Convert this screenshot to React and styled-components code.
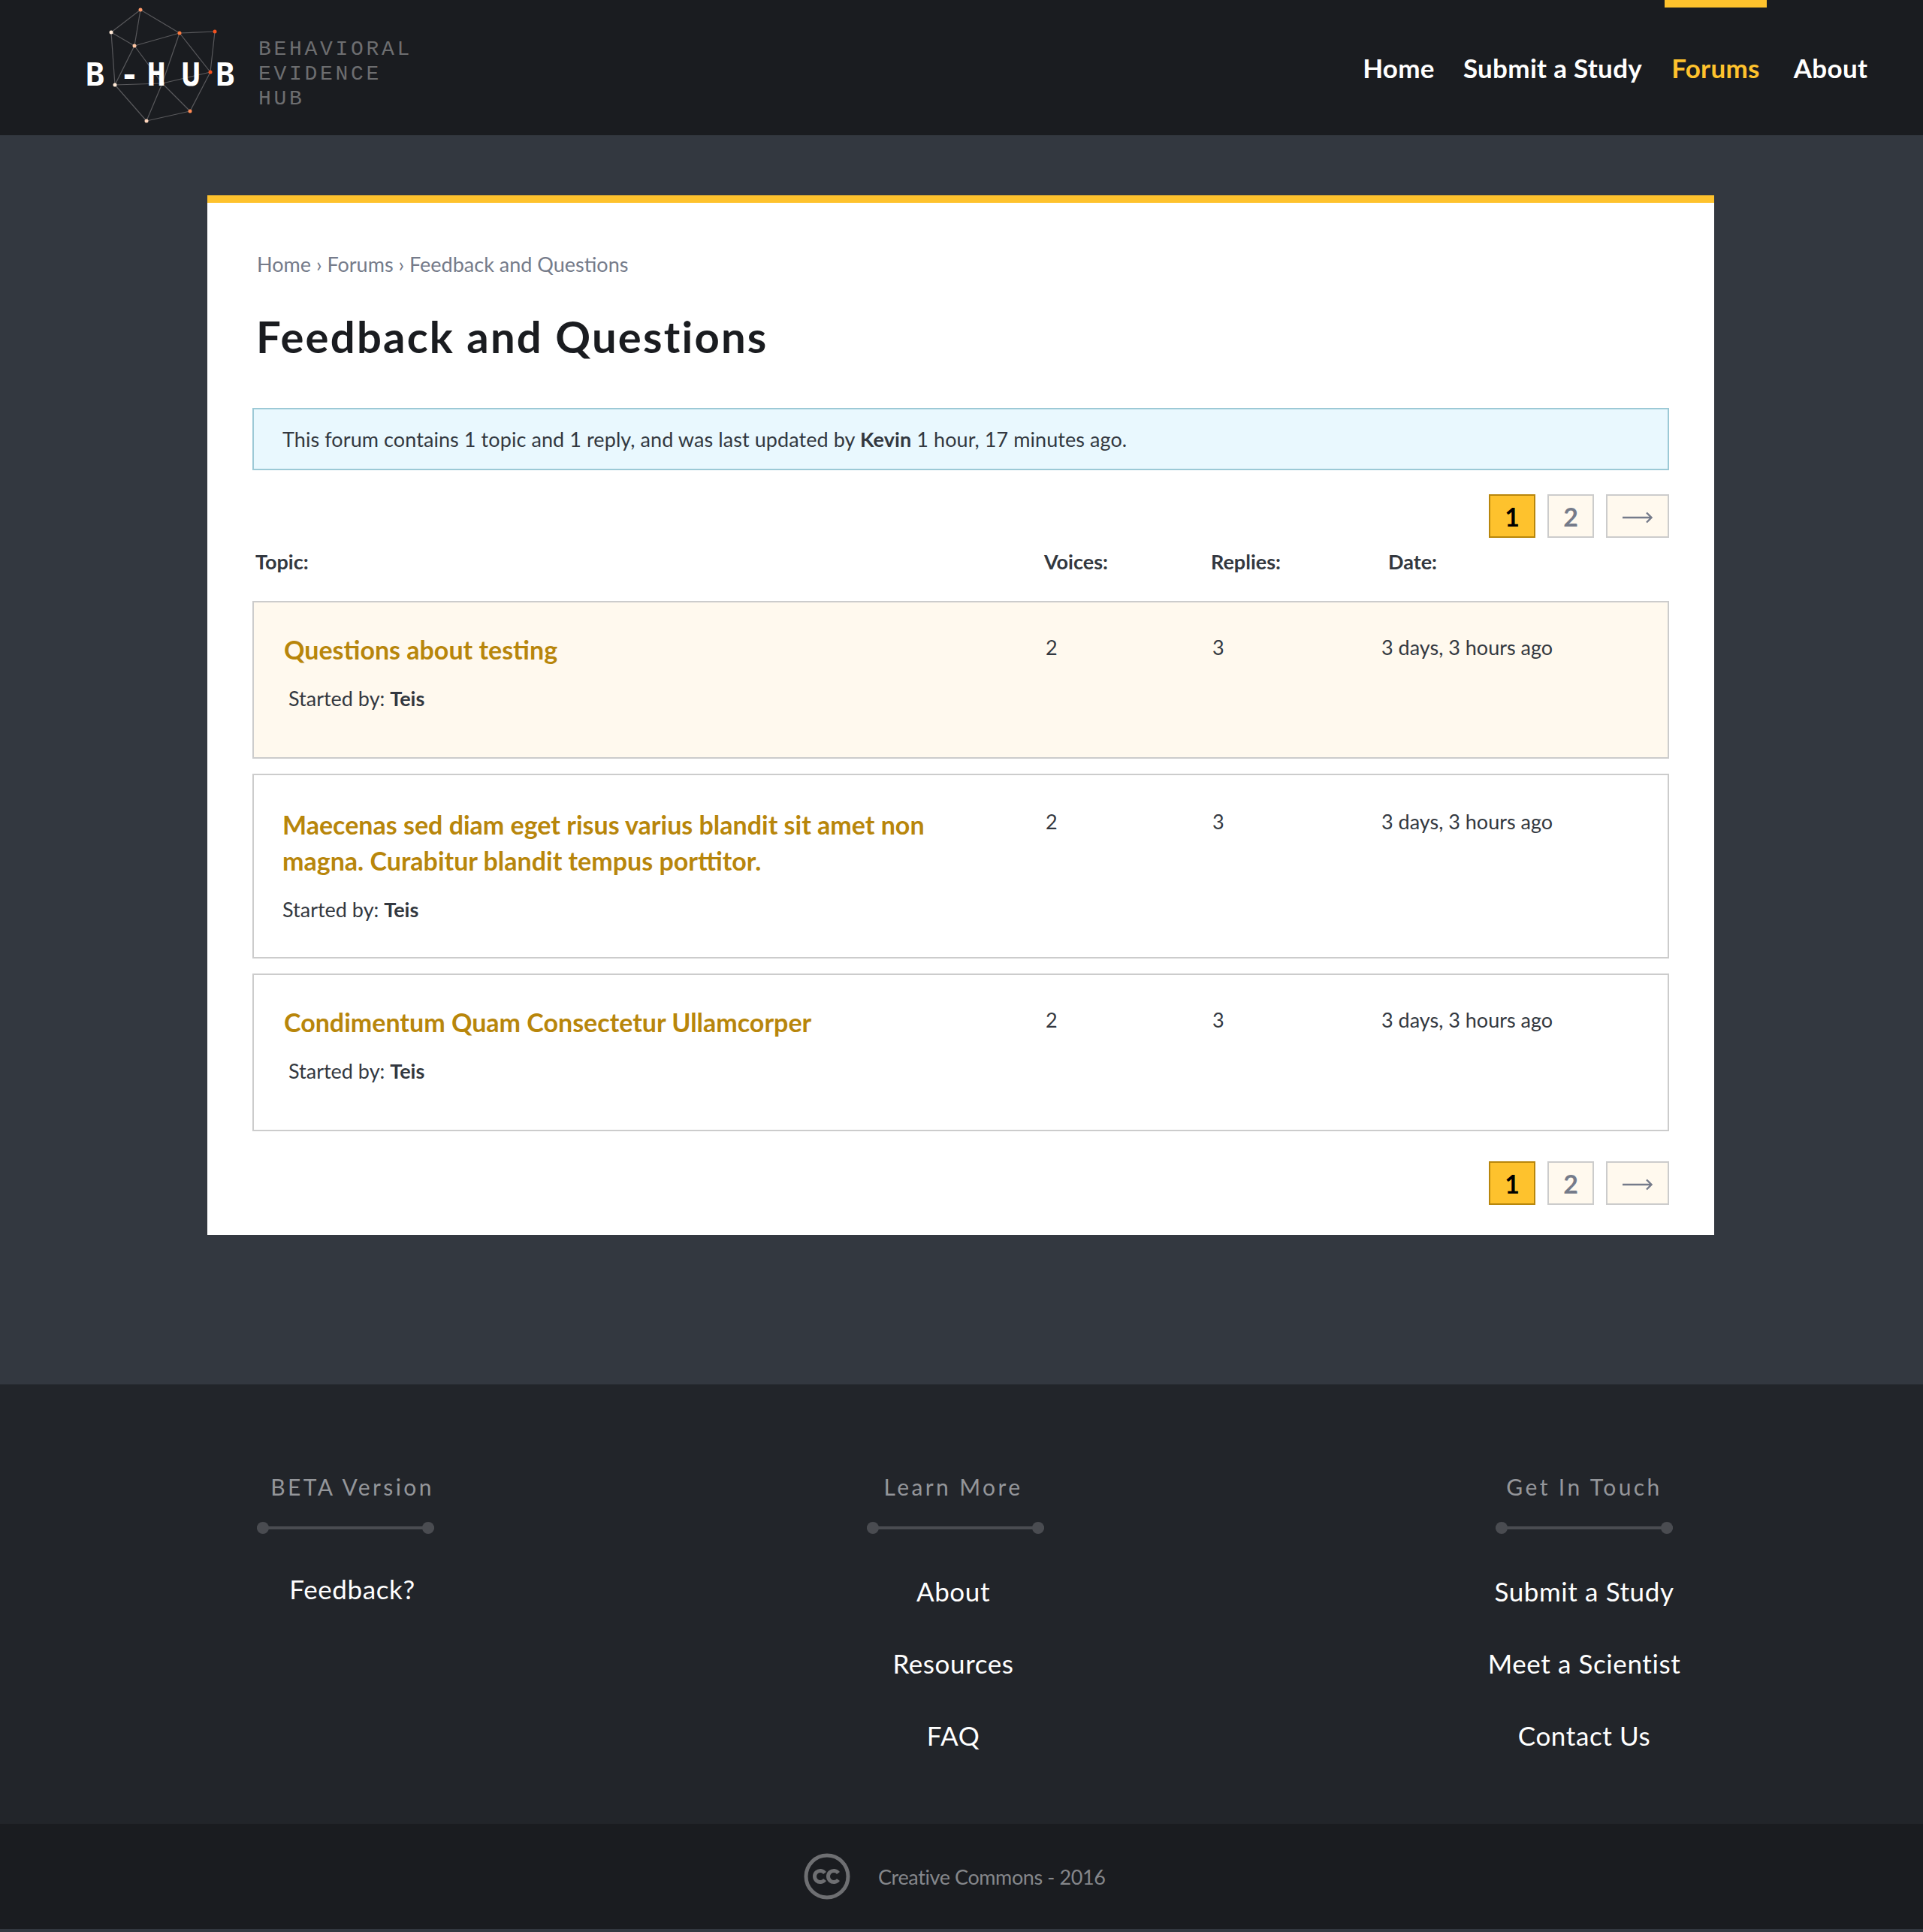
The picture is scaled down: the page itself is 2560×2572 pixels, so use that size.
import styled, { createGlobalStyle } from 'styled-components';

const GlobalStyle = createGlobalStyle`
  html, body {
    margin: 0;
    padding: 0;
    background: #333840;
  }
  body {
    font-family: "Lato", "Open Sans", sans-serif;
    color: #333840;
  }
`;

const Page = styled.div`
  width: 2560px;
  height: 2572px;
  overflow: hidden;
`;

const Header = styled.header`
  height: 180px;
  background: #1a1c20;
  display: flex;
  align-items: flex-start;
  justify-content: space-between;
  padding-left: 114px;
`;

const Logo = styled.div`
  position: relative;
  height: 180px;
  display: flex;
  align-items: center;
`;

const LogoNet = styled.svg`
  position: absolute;
  left: -114px;
  top: 0;
  width: 320px;
  height: 180px;
`;

const LogoMark = styled.span`
  position: relative;
  width: 230px;
  margin-top: 18px;
  font-family: "DejaVu Sans Mono", monospace;
  font-weight: 700;
  font-size: 42px;
  letter-spacing: 20.5px;
  color: #fff;
  white-space: pre;
`;

const Hyphen = styled.span`
  letter-spacing: 10.5px;
`;

const Tagline = styled.div`
  font-family: "Liberation Mono", monospace;
  font-size: 28px;
  line-height: 33px;
  letter-spacing: 3.7px;
  color: #6d6e70;
  margin-top: 16px;
`;

const Nav = styled.nav`
  display: flex;
  height: 180px;
  padding-right: 38px;
`;

const NavLink = styled.a`
  display: block;
  box-sizing: border-box;
  width: ${(p) => p.$width}px;
  height: 180px;
  padding-top: ${(p) => (p.$active ? 48 : 58)}px;
  border-top: ${(p) => (p.$active ? '10px solid #fec22d' : '0')};
  font-size: 35px;
  font-weight: 700;
  line-height: 64px;
  letter-spacing: 0.3px;
  text-align: center;
  white-space: nowrap;
  color: ${(p) => (p.$active ? '#fec22d' : '#fff')};
`;

const Main = styled.main`
  box-sizing: border-box;
  height: 1663px;
  padding: 80px 278px 0 276px;
`;

const Card = styled.section`
  box-sizing: border-box;
  height: 1384px;
  background: #fff;
  border-top: 10px solid #fec22d;
  padding: 62px 60px 0;
`;

const Breadcrumb = styled.div`
  font-size: 27px;
  line-height: 40px;
  padding-left: 6px;
  color: #757b8a;
`;

const Title = styled.h1`
  margin: 36px 0 0 5px;
  font-size: 58px;
  line-height: 80px;
  font-weight: 700;
  letter-spacing: 2.2px;
  color: #1a1c20;
`;

const Notice = styled.div`
  box-sizing: border-box;
  height: 83px;
  margin-top: 55px;
  padding: 0 38px;
  background: #e9f8fe;
  border: 2px solid #9cc9d6;
  font-size: 27px;
  line-height: 79px;
  letter-spacing: 0.08px;
`;

const Pager = styled.div`
  display: flex;
  justify-content: flex-end;
  gap: 16px;
  margin-top: ${(p) => p.$top}px;
`;

const PageButton = styled.a`
  box-sizing: border-box;
  width: ${(p) => p.$width || 62}px;
  height: 58px;
  display: flex;
  align-items: center;
  justify-content: center;
  background: ${(p) => (p.$active ? '#fec22d' : '#fff9ee')};
  border: 2px solid ${(p) => (p.$active ? '#b8860b' : '#ccc')};
  font-size: 34px;
  font-weight: 700;
  color: ${(p) => (p.$active ? '#000' : '#757b8a')};
`;

const ArrowIcon = styled.svg`
  margin-top: 4px;
`;

const ColumnHead = styled.div`
  display: grid;
  grid-template-columns: 1050px 222px 236px 1fr;
  margin-top: 12px;
  padding-left: 4px;
  font-size: 27px;
  font-weight: 700;
  line-height: 40px;
  color: #333840;
`;

const Rows = styled.div`
  display: flex;
  flex-direction: column;
  gap: 20px;
  margin-top: 32px;
`;

const Row = styled.article`
  box-sizing: border-box;
  height: ${(p) => p.$height}px;
  display: grid;
  grid-template-columns: 1054px 222px 225px 1fr;
  align-items: start;
  padding-top: ${(p) => p.$top}px;
  background: ${(p) => (p.$sticky ? '#fff9ee' : '#fff')};
  border: 2px solid #ccc;
  font-size: 27px;
  line-height: 40px;
`;

const Topic = styled.div`
  padding-left: ${(p) => p.$indent}px;
  margin-top: ${(p) => p.$offset || 0}px;
`;

const TopicLink = styled.a`
  display: block;
  width: 900px;
  font-size: 34px;
  font-weight: 700;
  line-height: 48px;
  color: #b8860b;
`;

const Starter = styled.div`
  margin-top: 21px;
  padding-left: ${(p) => p.$indent}px;
`;

const Value = styled.span`
  margin-top: 1px;
`;

const Footer = styled.footer`
  box-sizing: border-box;
  height: 585px;
  background: #22252a;
  display: flex;
  padding: 113px 0 0 269px;
`;

const FooterColumn = styled.div`
  width: 400px;
  margin-right: ${(p) => p.$gap || 0}px;
  text-align: center;
`;

const FooterHeading = styled.h4`
  margin: 0;
  font-size: 30px;
  font-weight: 400;
  line-height: 46px;
  letter-spacing: 3.4px;
  color: #94969a;
`;

const Divider = styled.div`
  position: relative;
  width: 236px;
  height: 4px;
  margin: 30px auto 0;
  transform: translateX(${(p) => p.$shift}px);
  background: #4a4c51;
  &::before,
  &::after {
    content: '';
    position: absolute;
    top: -6px;
    width: 16px;
    height: 16px;
    border-radius: 50%;
    background: #4a4c51;
  }
  &::before { left: 0; }
  &::after { right: 0; }
`;

const FooterLinks = styled.div`
  display: flex;
  flex-direction: column;
  gap: 46px;
  margin-top: ${(p) => p.$top || 57}px;
`;

const FooterLink = styled.a`
  font-size: 35px;
  line-height: 50px;
  letter-spacing: 0.6px;
  color: #fff;
`;

const BottomBar = styled.div`
  height: 140px;
  background: #1a1c20;
  display: flex;
  align-items: center;
  padding-left: 1070px;
  gap: 37px;
  font-size: 27px;
  letter-spacing: -0.4px;
  color: #85878b;
`;

const topics = [
  { title: 'Questions about testing', height: 210, top: 39, indent: 40, starterIndent: 6, sticky: true },
  {
    title: 'Maecenas sed diam eget risus varius blandit sit amet non magna. Curabitur blandit tempus porttitor.',
    height: 246,
    top: 41,
    indent: 38,
    starterIndent: 0,
    offset: 1,
  },
  { title: 'Condimentum Quam Consectetur Ullamcorper', height: 210, top: 39, indent: 40, starterIndent: 6 },
];

const points = [
  [187, 13, '#ff9a6a'], [148, 43, '#ffe9d6'], [239, 44, '#ff7a3e'], [286, 42, '#f4511e'], [179, 61, '#ffc7a3'],
  [280, 96, '#f4511e'], [153, 113, '#ffe9d6'], [216, 111, '#ffb58c'], [253, 148, '#ff8a55'], [195, 161, '#ffd6bd'],
];

const edges = [
  [0, 1], [0, 4], [0, 2], [1, 4], [1, 6], [4, 2], [2, 3], [3, 5], [2, 5], [2, 7],
  [4, 6], [4, 7], [6, 7], [7, 5], [5, 8], [7, 8], [7, 9], [6, 9], [9, 8],
];

const Arrow = () => (
  <ArrowIcon width="40" height="16" viewBox="0 0 40 16" fill="none" stroke="#757b8a" strokeWidth="2.4">
    <path d="M0 8h38M32 1.5l6.5 6.5-6.5 6.5" />
  </ArrowIcon>
);

const Pagination = ({ top }) => (
  <Pager $top={top}>
    <PageButton $active>1</PageButton>
    <PageButton>2</PageButton>
    <PageButton $width={84}><Arrow /></PageButton>
  </Pager>
);

const App = () => (
  <Page>
    <GlobalStyle />
    <Header>
      <Logo>
        <LogoNet viewBox="0 0 320 180">
          {edges.map(([a, b]) => (
            <line
              key={`${a}-${b}`}
              x1={points[a][0]}
              y1={points[a][1]}
              x2={points[b][0]}
              y2={points[b][1]}
              stroke="#59595c"
              strokeWidth="1.2"
            />
          ))}
          {points.map(([x, y, color]) => (
            <circle key={`${x}-${y}`} cx={x} cy={y} r="2.5" fill={color} />
          ))}
        </LogoNet>
        <LogoMark>B<Hyphen>-</Hyphen>HUB</LogoMark>
        <Tagline>
          BEHAVIORAL<br />EVIDENCE<br />HUB
        </Tagline>
      </Logo>
      <Nav>
        <NavLink $width={112}>Home</NavLink>
        <NavLink $width={298}>Submit a Study</NavLink>
        <NavLink $width={136} $active>Forums</NavLink>
        <NavLink $width={170}>About</NavLink>
      </Nav>
    </Header>
    <Main>
      <Card>
        <Breadcrumb>Home › Forums › Feedback and Questions</Breadcrumb>
        <Title>Feedback and Questions</Title>
        <Notice>
          This forum contains 1 topic and 1 reply, and was last updated by <b>Kevin</b> 1 hour, 17 minutes ago.
        </Notice>
        <Pagination top={32} />
        <ColumnHead>
          <span>Topic:</span>
          <span>Voices:</span>
          <span>Replies:</span>
          <span>Date:</span>
        </ColumnHead>
        <Rows>
          {topics.map((t) => (
            <Row key={t.title} $height={t.height} $top={t.top} $sticky={t.sticky}>
              <Topic $indent={t.indent} $offset={t.offset}>
                <TopicLink>{t.title}</TopicLink>
                <Starter $indent={t.starterIndent}>
                  Started by: <b>Teis</b>
                </Starter>
              </Topic>
              <Value>2</Value>
              <Value>3</Value>
              <Value>3 days, 3 hours ago</Value>
            </Row>
          ))}
        </Rows>
        <Pagination top={40} />
      </Card>
    </Main>
    <Footer>
      <FooterColumn $gap={400}>
        <FooterHeading>BETA Version</FooterHeading>
        <Divider $shift={-9} />
        <FooterLinks $top={54}>
          <FooterLink>Feedback?</FooterLink>
        </FooterLinks>
      </FooterColumn>
      <FooterColumn $gap={440}>
        <FooterHeading>Learn More</FooterHeading>
        <Divider $shift={3} />
        <FooterLinks>
          <FooterLink>About</FooterLink>
          <FooterLink>Resources</FooterLink>
          <FooterLink>FAQ</FooterLink>
        </FooterLinks>
      </FooterColumn>
      <FooterColumn>
        <FooterHeading>Get In Touch</FooterHeading>
        <Divider $shift={0} />
        <FooterLinks>
          <FooterLink>Submit a Study</FooterLink>
          <FooterLink>Meet a Scientist</FooterLink>
          <FooterLink>Contact Us</FooterLink>
        </FooterLinks>
      </FooterColumn>
    </Footer>
    <BottomBar>
      <svg width="62" height="62" viewBox="0 0 62 62">
        <circle cx="31" cy="31" r="28" fill="none" stroke="#6e6f72" strokeWidth="5" />
        <path
          d="M28 26.5a7.5 7.5 0 1 0 0 9M46 26.5a7.5 7.5 0 1 0 0 9"
          fill="none"
          stroke="#6e6f72"
          strokeWidth="5"
        />
      </svg>
      <span>Creative Commons - 2016</span>
    </BottomBar>
  </Page>
);

export default App;
